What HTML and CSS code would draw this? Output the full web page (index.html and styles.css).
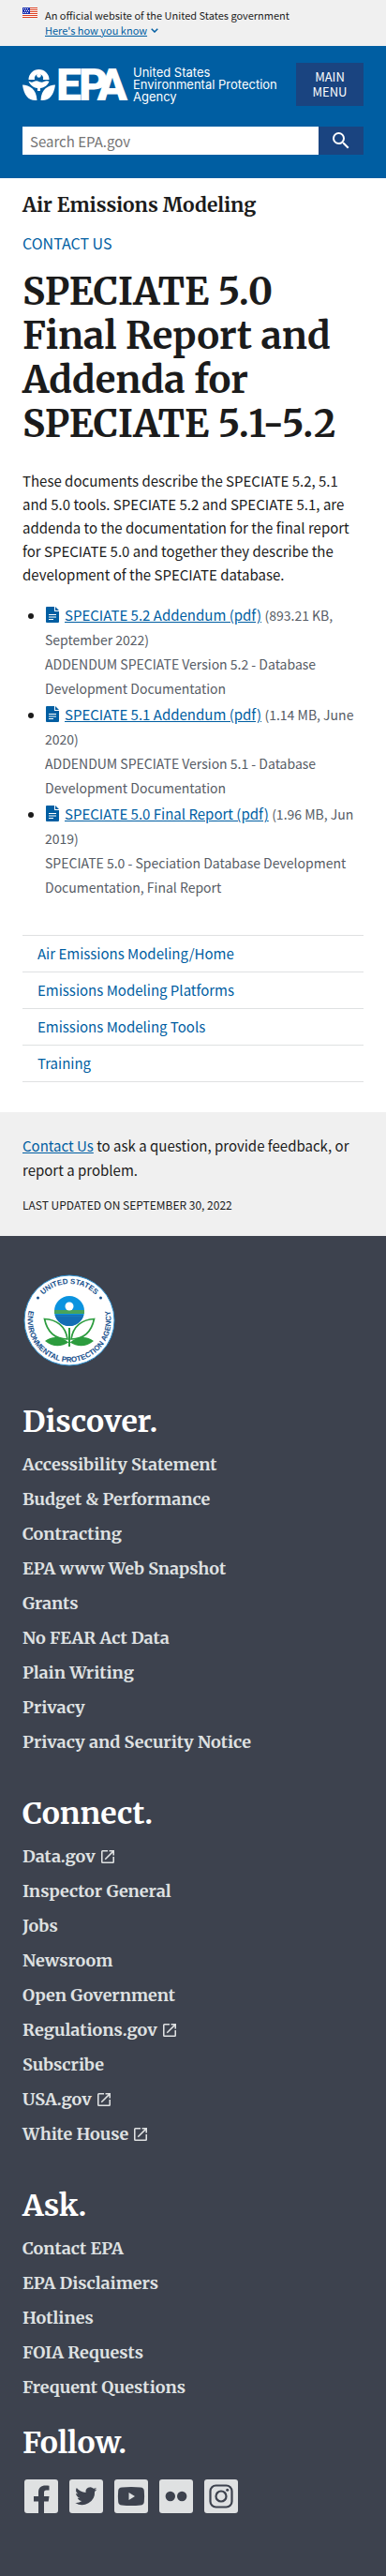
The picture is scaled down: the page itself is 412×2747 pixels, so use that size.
FILE: index.html
```html
<!DOCTYPE html>
<html lang="en">
<head>
<meta charset="utf-8">
<meta name="viewport" content="width=device-width, initial-scale=1">
<title>SPECIATE 5.0 Final Report and Addenda for SPECIATE 5.1-5.2 | US EPA</title>
<link rel="stylesheet" href="styles.css">
</head>
<body>
<svg class="sprite" aria-hidden="true">
  <symbol id="file" viewBox="0 0 14 17"><path fill="currentColor" d="M1 0h8v5h5v11a1 1 0 0 1-1 1H1a1 1 0 0 1-1-1V1a1 1 0 0 1 1-1zM10 0l4 4h-4z"/><path stroke="#fff" stroke-width="1.2" d="M3 8.5h8M3 11h8M3 13.500h5"/></symbol>
  <symbol id="external" viewBox="3 3 18 18"><path fill="currentColor" d="M19 19H5V5h7V3H5a2 2 0 0 0-2 2v14a2 2 0 0 0 2 2h14a2 2 0 0 0 2-2v-7h-2v7zM14 3v2h3.590l-9.830 9.830 1.410 1.410L19 6.410V10h2V3h-7z"/></symbol>
</svg>

<section class="banner" aria-label="Official government website">
  <svg class="banner-flag" viewBox="0 0 16 11" aria-hidden="true"><path fill="#fff" d="M0 0h16v11H0z"/><path stroke="#db3e1f" d="M0 .5h16M0 2.500h16M0 4.500h16M0 6.500h16M0 8.500h16M0 10.500h16"/><path fill="#1e33b1" d="M0 0h8v7H0z"/><path stroke="#fff" stroke-dasharray="1 1" d="M1 1.500h6M2 3.500h5M1 5.500h6"/></svg>
  <div class="banner-text">
    <p>An official website of the United States government</p>
    <button class="banner-button" type="button"><span>Here's how you know</span><svg viewBox="0 0 8 5" aria-hidden="true"><path fill="none" stroke="currentColor" stroke-width="1.500" d="M.7.7 4 4 7.300.7"/></svg></button>
  </div>
</section>

<header class="header">
  <div class="header-top">
    <a class="logo" href="#" aria-label="US EPA">
      <svg class="logo-mark" viewBox="0 0 114 35" aria-hidden="true">
        <g fill="#fff">
          <path d="M6.500 12a11 11 0 0 1 22 0h-6.500a4.700 4.700 0 1 0-9 0z"/><circle cx="17.500" cy="7.500" r="2.300"/>
          <path d="M6.500 13.500q3 2 5.500.5 3-1.500 6 .2 3 1 5-.3 2.500-1 5.500-.2c-1.500 4-5 6.800-9.500 7.300V24h-3v-3c-4.500-.6-8-3.300-9.500-7.500z"/>
          <path d="M0 17.500c7.500.5 15 4 15.500 16.500C7 35 1.500 29 0 17.500zM35 17.500c-7.500.5-15 4-15.500 16.500C28 35 33.500 29 35 17.500z"/>
          <text class="logo-letters" x="36 60 79.500" y="34">EPA</text>
        </g>
      </svg>
      <span class="logo-name">United States<br>Environmental Protection<br>Agency</span>
    </a>
    <button class="menu-button" type="button">MAIN MENU</button>
  </div>
  <form class="search" role="search">
    <input class="search-input" type="search" placeholder="Search EPA.gov" aria-label="Search EPA.gov">
    <button class="search-button" type="button" aria-label="Search"><svg viewBox="3 3 18 18" aria-hidden="true"><path fill="currentColor" d="M15.500 14h-.79l-.28-.27A6.470 6.470 0 0 0 16 9.500 6.500 6.500 0 1 0 9.500 16c1.610 0 3.090-.59 4.230-1.570l.27.28v.79l5 4.990L20.490 19l-4.990-5zm-6 0a4.500 4.500 0 1 1 0-9 4.500 4.500 0 0 1 0 9z"/></svg></button>
  </form>
</header>

<main class="main">
  <h2 class="site-title">Air Emissions Modeling</h2>
  <a class="contact" href="#">CONTACT US</a>
  <h1 class="title">SPECIATE 5.0<br>Final Report and<br>Addenda for<br>SPECIATE 5.1-5.2</h1>
  <p class="intro">These documents describe the SPECIATE 5.2, 5.1 and 5.0 tools. SPECIATE 5.2 and SPECIATE 5.1, are addenda to the documentation for the final report for SPECIATE 5.0 and together they describe the development of the SPECIATE database.</p>
  <ul class="files">
    <li><svg class="file-icon" aria-hidden="true"><use href="#file"/></svg><a href="#">SPECIATE 5.2 Addendum (pdf)</a> <small>(893.21 KB, September 2022)<br>ADDENDUM SPECIATE Version 5.2 - Database Development Documentation</small></li>
    <li><svg class="file-icon" aria-hidden="true"><use href="#file"/></svg><a href="#">SPECIATE 5.1 Addendum (pdf)</a> <small>(1.14 MB, June 2020)<br>ADDENDUM SPECIATE Version 5.1 - Database Development Documentation</small></li>
    <li><svg class="file-icon" aria-hidden="true"><use href="#file"/></svg><a href="#">SPECIATE 5.0 Final Report (pdf)</a> <small>(1.96 MB, Jun 2019)<br>SPECIATE 5.0 - Speciation Database Development Documentation, Final Report</small></li>
  </ul>
  <nav class="sidenav" aria-label="Side navigation">
    <a href="#">Air Emissions Modeling/Home</a>
    <a href="#">Emissions Modeling Platforms</a>
    <a href="#">Emissions Modeling Tools</a>
    <a href="#">Training</a>
  </nav>
</main>

<section class="feedback">
  <p><a href="#">Contact Us</a> to ask a question, provide feedback, or report a problem.</p>
  <p class="updated">LAST UPDATED ON SEPTEMBER 30, 2022</p>
</section>

<footer class="footer">
  <svg class="seal" viewBox="0 0 100 100" role="img" aria-label="EPA seal">
    <defs>
      <path id="arc-top" d="M11 50a39 39 0 0 1 78 0"/>
      <path id="arc-bottom" d="M10.700 29.100a44.500 44.500 0 1 0 78.600 0"/>
    </defs>
    <circle cx="50" cy="50" r="48" fill="#fff" stroke="#2b8fd0"/>
    <text class="seal-text"><textPath href="#arc-top" startOffset="50%" text-anchor="middle">UNITED STATES</textPath></text>
    <text class="seal-text"><textPath href="#arc-bottom" startOffset="50%" text-anchor="middle">ENVIRONMENTAL PROTECTION AGENCY</textPath></text>
    <circle cx="16.500" cy="26" r="1.500" fill="#164f8c"/><circle cx="83.500" cy="26" r="1.500" fill="#164f8c"/>
    <circle cx="50" cy="40" r="16" fill="#0b93df"/>
    <path fill="#146eb4" d="M34.500 44h31a16 16 0 0 1-31 0z"/>
    <path fill="#49a35b" d="M34 39h32v4H34z"/>
    <path stroke="#1b79b9" stroke-width="1.500" d="M35 45.500h30"/>
    <circle cx="50" cy="35" r="4.500" fill="#fff"/>
    <path fill="#fff" stroke="#2c9c3e" stroke-width="1.700" d="M48 70C36 70 27 65 23.500 48.500 36 49 46 56 48 70zM52 70c12 0 21-5 24.500-21.500C64 49 54 56 52 70z"/>
    <path fill="#2c9c3e" d="M24 72c8-6 17-5 25.300 1.500C42 78.500 32 79 24 72zM76 72c-8-6-17-5-25.300 1.500C58 78.500 68 79 76 72zM49 58h2v20h-2z"/>
  </svg>

  <section class="group">
    <h2>Discover.</h2>
    <ul>
      <li><a href="#">Accessibility Statement</a></li>
      <li><a href="#">Budget &amp; Performance</a></li>
      <li><a href="#">Contracting</a></li>
      <li><a href="#">EPA www Web Snapshot</a></li>
      <li><a href="#">Grants</a></li>
      <li><a href="#">No FEAR Act Data</a></li>
      <li><a href="#">Plain Writing</a></li>
      <li><a href="#">Privacy</a></li>
      <li><a href="#">Privacy and Security Notice</a></li>
    </ul>
  </section>
  <section class="group">
    <h2>Connect.</h2>
    <ul>
      <li><a href="#">Data.gov<svg aria-hidden="true"><use href="#external"/></svg></a></li>
      <li><a href="#">Inspector General</a></li>
      <li><a href="#">Jobs</a></li>
      <li><a href="#">Newsroom</a></li>
      <li><a href="#">Open Government</a></li>
      <li><a href="#">Regulations.gov<svg aria-hidden="true"><use href="#external"/></svg></a></li>
      <li><a href="#">Subscribe</a></li>
      <li><a href="#">USA.gov<svg aria-hidden="true"><use href="#external"/></svg></a></li>
      <li><a href="#">White House<svg aria-hidden="true"><use href="#external"/></svg></a></li>
    </ul>
  </section>
  <section class="group group-last">
    <h2>Ask.</h2>
    <ul>
      <li><a href="#">Contact EPA</a></li>
      <li><a href="#">EPA Disclaimers</a></li>
      <li><a href="#">Hotlines</a></li>
      <li><a href="#">FOIA Requests</a></li>
      <li><a href="#">Frequent Questions</a></li>
    </ul>
  </section>
  <section>
    <h2>Follow.</h2>
    <div class="social">
      <a href="#" aria-label="Facebook"><svg viewBox="0 0 36 36"><path fill="currentColor" d="M15 36V23.500h-5V18h5v-4c0-5.500 3-7.500 7.500-7.500 1.700 0 3 .1 4 .3v4.700h-2.800c-2.200 0-2.700 1-2.700 2.700V18h5.500l-.8 5.500H21V36z"/></svg></a>
      <a href="#" aria-label="Twitter"><svg viewBox="0 0 36 36"><path fill="currentColor" d="M29.500 10.500c-.9.400-1.800.6-2.700.8 1-.6 1.700-1.500 2-2.600-.9.500-1.900.9-3 1.100a4.800 4.800 0 0 0-8.200 4.300c-4-.2-7.400-2.100-9.800-5a4.800 4.800 0 0 0 1.500 6.300c-.8 0-1.500-.2-2.200-.6 0 2.300 1.600 4.300 3.900 4.800-.7.200-1.500.2-2.200.1.600 1.900 2.400 3.200 4.500 3.300a9.500 9.500 0 0 1-7 2 13.500 13.500 0 0 0 20.800-12c.9-.7 1.700-1.500 2.400-2.500z"/></svg></a>
      <a href="#" aria-label="YouTube"><svg viewBox="0 0 36 36"><path fill="currentColor" fill-rule="evenodd" d="M8 8.500Q18 7.500 28 8.500q3.500.3 3.800 3.500.6 6 0 12-.3 3.200-3.800 3.500-10 1-20 0-3.500-.3-3.800-3.500-.6-6 0-12Q4.500 8.800 8 8.500zM15.500 14v8l6.500-4z"/></svg></a>
      <a href="#" aria-label="Flickr"><svg viewBox="0 0 36 36"><g fill="currentColor"><circle cx="11.800" cy="18" r="5.200"/><circle cx="24.200" cy="18" r="5.200"/></g></svg></a>
      <a href="#" aria-label="Instagram"><svg viewBox="0 0 36 36"><g fill="none" stroke="currentColor" stroke-width="2.200"><rect x="6.500" y="6.500" width="23" height="23" rx="6"/><circle cx="18" cy="18" r="5.500"/></g><circle cx="24.700" cy="11.300" r="1.500" fill="currentColor"/></svg></a>
    </div>
  </section>
</footer>
</body>
</html>
```
FILE: styles.css
```css
:root {
  --blue: #005ea2;
  --navy: #1a4480;
  --ink: #1b1b1b;
  --pale: #f0f0f0;
  --slate: #3d424e;
  --sans: "Noto Sans CJK SC", "Open Sans", sans-serif;
  --serif: "Merriweather", "DejaVu Serif Condensed", "DejaVu Serif", serif;
}

* { box-sizing: border-box; }

body {
  margin: 0;
  background: #fff;
  color: var(--ink);
  font: 15px/26px var(--sans);
}

h1, h2, p, ul { margin: 0; padding: 0; }
h1, h2 { font-family: var(--serif); font-weight: 700; }
a { color: var(--blue); }
button, input { margin: 0; border: 0; border-radius: 0; font-family: inherit; }
svg { display: block; }
.sprite { display: none; }

.banner {
  display: flex;
  gap: 8px;
  padding: 8px 24px 9px;
  background: var(--pale);
  font-size: 11px;
  line-height: 16px;
}
.banner-flag { width: 16px; height: 11px; }
.banner-button {
  display: flex;
  align-items: center;
  gap: 4px;
  padding: 0;
  background: none;
  color: var(--blue);
  font-size: 11px;
  line-height: 16px;
}
.banner-button span { text-decoration: underline; }
.banner-button svg { width: 8px; height: 5px; }

.header { padding: 18px 24px 25px; background: var(--blue); }
.header-top { display: flex; justify-content: space-between; align-items: center; }
.logo { display: flex; align-items: center; gap: 4px; color: #fff; text-decoration: none; }
.logo-mark { width: 114px; height: 35px; overflow: visible; }
.logo-letters { font: 900 48px Roboto, sans-serif; }
.logo-name { font: 13px/13px Inter, sans-serif; white-space: nowrap; }
.menu-button {
  width: 72px;
  padding: 7px 12px;
  background: var(--navy);
  color: #fff;
  font-size: 13px;
  line-height: 16px;
}
.search { display: flex; margin-top: 22px; }
.search-input {
  flex: 1;
  min-width: 0;
  height: 30px;
  padding: 0 8px;
  background: #fff;
  color: var(--ink);
  font-size: 15px;
}
.search-input::placeholder { color: #757575; opacity: 1; }
.search-button {
  display: grid;
  place-items: center;
  width: 48px;
  padding: 0;
  background: var(--navy);
  color: #fff;
}
.search-button svg { width: 18px; height: 18px; }

.main { padding: 15px 24px 32px; }
.site-title { font-size: 21px; line-height: 28px; }
.contact { display: block; margin-top: 13px; font-size: 16px; text-decoration: none; }
.title { margin-top: 16px; font-size: 40px; line-height: 47px; }
.intro { margin-top: 24px; line-height: 25px; }

.files { margin-top: 18px; padding-left: 24px; }
.files li { margin-bottom: 2px; }
.files small { color: #565c65; font-size: 14px; line-height: 20px; }
.file-icon { display: inline-block; width: 14px; height: 17px; margin: 0 6px 0 1px; vertical-align: -2px; color: var(--blue); }

.sidenav { margin-top: 38px; border-bottom: 1px solid #dfe1e2; }
.sidenav a {
  display: block;
  padding: 6px 16px;
  border-top: 1px solid #dfe1e2;
  text-decoration: none;
}

.feedback { padding: 23px 24px 20px; background: var(--pale); }
.updated { margin-top: 11px; font-size: 12px; }

.footer { padding: 40px 24px 67px; background: var(--slate); color: #fff; }
.footer h2 { font-size: 32px; line-height: 40px; }
.seal { width: 100px; height: 100px; margin-bottom: 38px; }
.seal-text { fill: #164f8c; font: 700 8px "Liberation Sans", sans-serif; }
.group { margin-bottom: 38px; }
.group-last { margin-bottom: 21px; }
.footer ul { margin-top: 7px; list-style: none; }
.footer li a {
  display: flex;
  align-items: center;
  gap: 6px;
  color: #dfe1e2;
  font: 700 18px/37px var(--serif);
  text-decoration: none;
}
.footer li svg { width: 14px; height: 14px; }
.social { display: flex; gap: 12px; margin: 19px 0 0 2px; }
.social a { width: 36px; height: 36px; border-radius: 3px; background: #dfe1e2; color: var(--slate); }
```
